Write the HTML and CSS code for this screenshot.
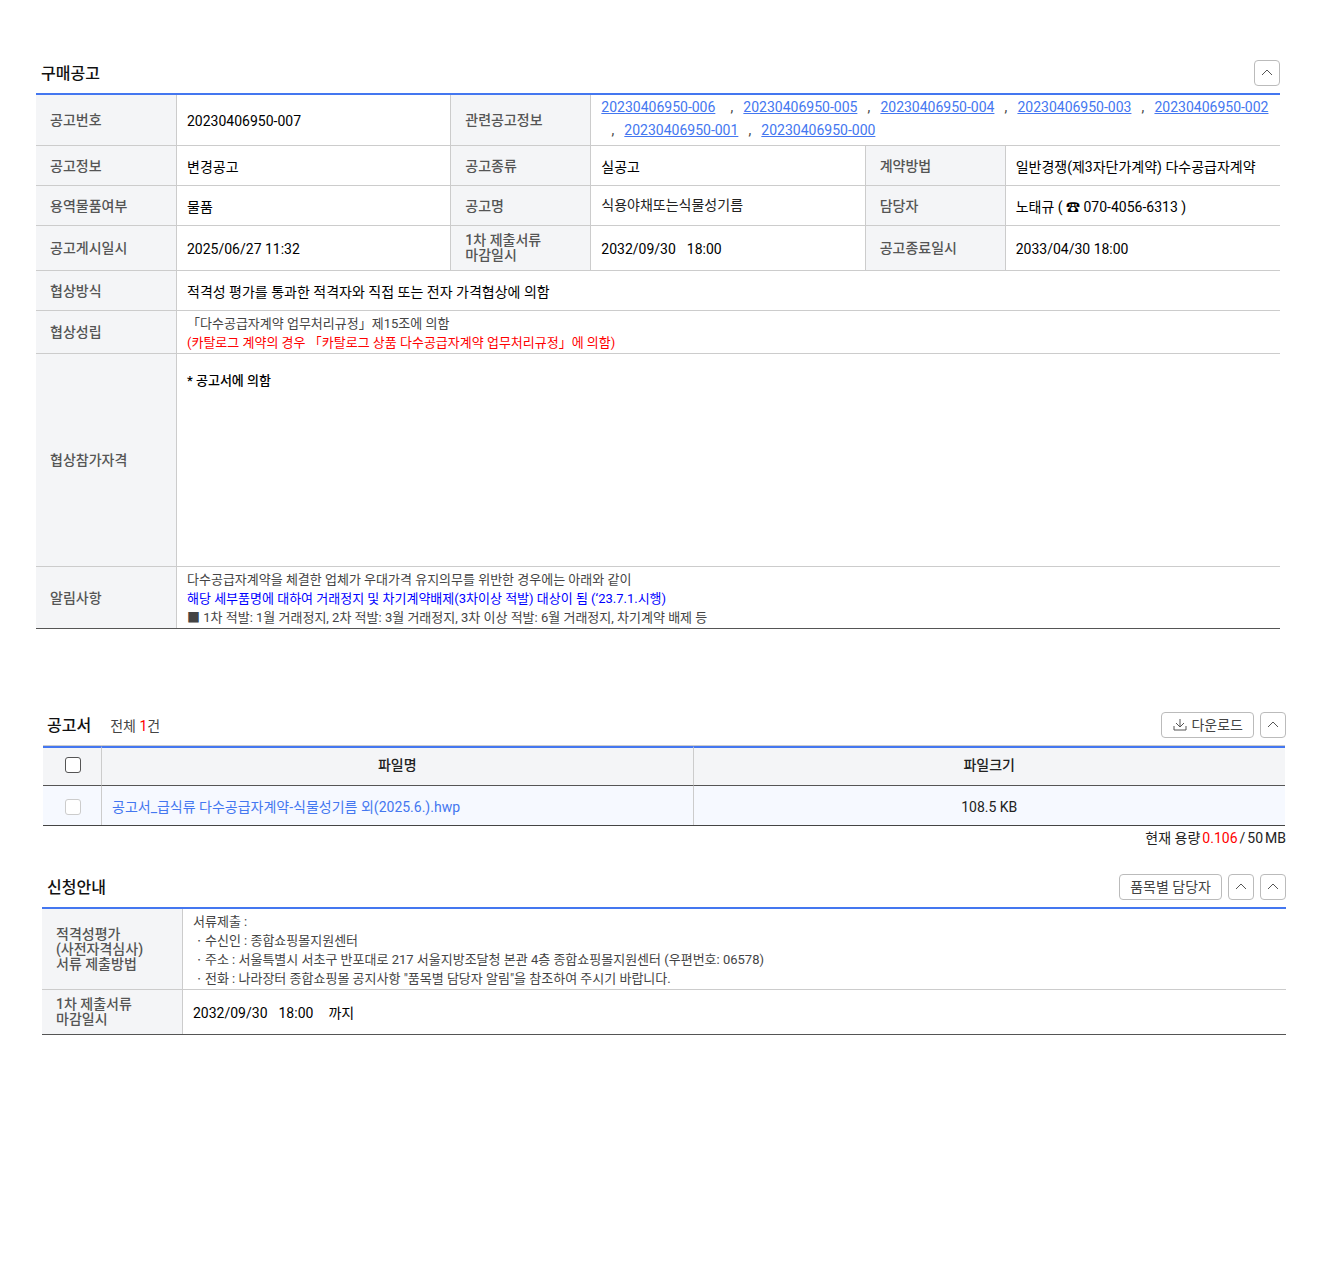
FILE: index.html
```html
<!DOCTYPE html>
<html lang="ko">
    <head>
        <meta charset="utf-8">
        <title>구매공고</title>
        <link rel="stylesheet" href="styles.css">
    </head>
    <body>
        <section class="notice">
            <div class="section-head">
                <h2>구매공고</h2>
                <div class="btns">
                    <button type="button" class="btn btn-fold" aria-label="접기"><svg viewBox="0 0 12 12"><path d="M1 8L6 3L11 8"/></svg></button>
                </div>
            </div>
            <table class="info-table">
                <colgroup>
                    <col class="col-th"><col><col class="col-th-sub"><col><col class="col-th-sub"><col>
                </colgroup>
                <tr class="row-links">
                    <th scope="row">공고번호</th>
                    <td>20230406950-007</td>
                    <th scope="row">관련공고정보</th>
                    <td colspan="3">
                        <div class="links">
                            <a href="#" class="latest">20230406950-006</a><span>,</span>
                            <a href="#">20230406950-005</a><span>,</span>
                            <a href="#">20230406950-004</a><span>,</span>
                            <a href="#">20230406950-003</a><span>,</span>
                            <a href="#">20230406950-002</a><span>,</span>
                            <a href="#">20230406950-001</a><span>,</span>
                            <a href="#">20230406950-000</a>
                        </div>
                    </td>
                </tr>
                <tr>
                    <th scope="row">공고정보</th>
                    <td>변경공고</td>
                    <th scope="row">공고종류</th>
                    <td>실공고</td>
                    <th scope="row">계약방법</th>
                    <td>일반경쟁(제3자단가계약) 다수공급자계약</td>
                </tr>
                <tr>
                    <th scope="row">용역물품여부</th>
                    <td>물품</td>
                    <th scope="row">공고명</th>
                    <td class="name">식용야채또는식물성기름</td>
                    <th scope="row">담당자</th>
                    <td>노태규 ( ☎ 070-4056-6313 )</td>
                </tr>
                <tr class="row-two">
                    <th scope="row">공고게시일시</th>
                    <td>2025/06/27 11:32</td>
                    <th scope="row">1차 제출서류<br>마감일시</th>
                    <td><span class="date">2032/09/30</span>18:00</td>
                    <th scope="row">공고종료일시</th>
                    <td>2033/04/30 18:00</td>
                </tr>
                <tr>
                    <th scope="row">협상방식</th>
                    <td colspan="5">적격성 평가를 통과한 적격자와 직접 또는 전자 가격협상에 의함</td>
                </tr>
                <tr>
                    <th scope="row">협상성립</th>
                    <td colspan="5" class="desc">
                        <p>「다수공급자계약 업무처리규정」제15조에 의함</p>
                        <p class="red">(카탈로그 계약의 경우 「카탈로그 상품 다수공급자계약 업무처리규정」에 의함)</p>
                    </td>
                </tr>
                <tr class="row-tall">
                    <th scope="row">협상참가자격</th>
                    <td colspan="5">* 공고서에 의함</td>
                </tr>
                <tr>
                    <th scope="row">알림사항</th>
                    <td colspan="5" class="desc">
                        <p>다수공급자계약을 체결한 업체가 우대가격 유지의무를 위반한 경우에는 아래와 같이</p>
                        <p class="blue">해당 세부품명에 대하여 거래정지 및 차기계약배제(3차이상 적발) 대상이 됨 (‘23.7.1.시행)</p>
                        <p>■ 1차 적발: 1월 거래정지, 2차 적발: 3월 거래정지, 3차 이상 적발: 6월 거래정지, 차기계약 배제 등</p>
                    </td>
                </tr>
            </table>
        </section>

        <section class="files">
            <div class="section-head">
                <h2>공고서</h2>
                <p class="total">전체 <em>1</em>건</p>
                <div class="btns">
                    <button type="button" class="btn"><svg viewBox="0 0 14 14"><path d="M8 1V9M4 5L8 9L12 5M2 8V12H14V8"/></svg>다운로드</button>
                    <button type="button" class="btn btn-fold" aria-label="접기"><svg viewBox="0 0 12 12"><path d="M1 8L6 3L11 8"/></svg></button>
                </div>
            </div>
            <table class="file-table">
                <colgroup>
                    <col class="col-check"><col><col>
                </colgroup>
                <thead>
                    <tr>
                        <th scope="col"><input type="checkbox" aria-label="전체 선택"></th>
                        <th scope="col">파일명</th>
                        <th scope="col">파일크기</th>
                    </tr>
                </thead>
                <tbody>
                    <tr>
                        <td><input type="checkbox" aria-label="파일 선택" disabled></td>
                        <td class="file-name"><a href="#">공고서_급식류 다수공급자계약-식물성기름 외(2025.6.).hwp</a></td>
                        <td>108.5 KB</td>
                    </tr>
                </tbody>
            </table>
            <p class="capacity"><span>현재 용량</span><em>0.106</em><span>/</span><span>50</span><span>MB</span></p>
        </section>

        <section class="apply">
            <div class="section-head">
                <h2>신청안내</h2>
                <div class="btns">
                    <button type="button" class="btn">품목별 담당자</button>
                    <button type="button" class="btn btn-fold" aria-label="접기"><svg viewBox="0 0 12 12"><path d="M1 8L6 3L11 8"/></svg></button>
                    <button type="button" class="btn btn-fold" aria-label="전체 접기"><svg viewBox="0 0 12 12"><path d="M1 8L6 3L11 8"/></svg></button>
                </div>
            </div>
            <table class="info-table">
                <colgroup>
                    <col class="col-th"><col>
                </colgroup>
                <tr>
                    <th scope="row">적격성평가<br>(사전자격심사)<br>서류 제출방법</th>
                    <td class="desc">
                        <p>서류제출 :</p>
                        <p>ㆍ수신인 : 종합쇼핑몰지원센터</p>
                        <p>ㆍ주소 : 서울특별시 서초구 반포대로 217 서울지방조달청 본관 4층 종합쇼핑몰지원센터 (우편번호: 06578)</p>
                        <p>ㆍ전화 : 나라장터 종합쇼핑몰 공지사항 "품목별 담당자 알림"을 참조하여 주시기 바랍니다.</p>
                    </td>
                </tr>
                <tr class="row-two">
                    <th scope="row">1차 제출서류<br>마감일시</th>
                    <td><span class="date">2032/09/30</span><span class="time">18:00</span>까지</td>
                </tr>
            </table>
        </section>
    </body>
</html>
```
FILE: styles.css
```css
* {
    box-sizing: border-box;
}

body {
    margin: 0;
    padding: 60px 54px 60px 42px;
    background-color: #fff;
    color: #000;
    font-family: Roboto, "Noto Sans CJK KR", sans-serif;
    font-size: 14px;
    line-height: 20px;
}

h2, p {
    margin: 0;
}

em {
    font-style: normal;
    color: #f00;
}

/* section header */
.section-head {
    display: flex;
    align-items: center;
    height: 26px;
    margin-bottom: 7px;
    padding-left: 5px;
}

.section-head h2 {
    padding-top: 1px;
    font-size: 16px;
    font-weight: 500;
    color: #111;
}

.notice {
    margin: 0 6px 83px -6px;
}

.files {
    margin-bottom: 24px;
}

.total {
    margin-left: 19px;
    padding-top: 2px;
    color: #444;
}

.btns {
    display: flex;
    gap: 6px;
    margin-left: auto;
}

.btn {
    display: flex;
    align-items: center;
    justify-content: center;
    gap: 5px;
    height: 26px;
    padding: 0 10px;
    border: 1px solid #bbb;
    border-radius: 4px;
    background-color: #fff;
    color: #444;
    font: inherit;
}

.btn svg {
    width: 14px;
    height: 14px;
    overflow: visible;
    fill: none;
    stroke: #555;
    stroke-width: 1;
}

.btn-fold {
    width: 26px;
    padding: 0;
}

.btn-fold svg {
    width: 12px;
    height: 12px;
}

/* tables */
table {
    width: 100%;
    table-layout: fixed;
    border-collapse: separate;
    border-spacing: 0;
}

.col-th {
    width: 141px;
}

.col-th-sub {
    width: 140px;
}

.info-table {
    border-top: 2px solid #4477f0;
    border-bottom: 1px solid #555;
}

.info-table th, .info-table td {
    height: 40px;
    border-right: 1px solid #ccc;
    border-bottom: 1px solid #ccc;
    text-align: left;
}

.info-table th {
    padding: 1px 14px 0;
    background-color: #f4f5f7;
    color: #555;
    font-weight: 500;
    line-height: 15px;
}

.info-table td {
    padding: 2px 0 0 10px;
}

.info-table td:last-child {
    border-right: 0;
}

.info-table tr:last-child > * {
    border-bottom: 0;
}

.info-table .row-two > * {
    height: 45px;
}

.info-table .row-two:last-child > * {
    height: 44px;
}

.info-table .row-two th {
    padding-top: 0;
}

.info-table .row-tall > * {
    height: 213px;
}

.info-table .row-tall td {
    padding-top: 17px;
    font-size: 13px;
    font-weight: 500;
    vertical-align: top;
}

.info-table td.name {
    padding: 0 0 2px 10px;
    color: #222;
}

.info-table td.desc {
    padding: 3px 10px 1px;
    color: #444;
    font-size: 13px;
    line-height: 19px;
}

.desc .red {
    color: #f00;
}

.desc .blue {
    color: #00f;
}

.info-table .row-links td:last-child {
    padding: 1px 0 3px 10px;
}

.links {
    display: flex;
    flex-wrap: wrap;
    line-height: 23px;
}

.links a {
    color: #4477f0;
}

.links .latest {
    margin-right: 5px;
}

.links span {
    width: 23px;
    color: #444;
    text-align: center;
}

.date {
    margin-right: 11px;
}

.time {
    margin-right: 15px;
}

/* file list */
.file-table {
    width: calc(100% - 2px);
    margin: 0 1px;
    border-top: 1px solid #ccc;
    border-bottom: 1px solid #444;
}

.col-check {
    width: 59px;
}

.file-table th, .file-table td {
    height: 39px;
    padding: 0 10px;
    border-right: 1px solid #ccc;
    text-align: center;
    color: #222;
}

.file-table th {
    height: 40px;
    padding-bottom: 3px;
    border-top: 2px solid #4477f0;
    border-bottom: 1px solid #555;
    background-color: #f4f5f7;
    font-weight: 500;
}

.file-table td {
    padding-top: 3px;
    background-color: #f6f9ff;
}

.file-table tr > :last-child {
    border-right: 0;
}

.file-table tr > :first-child {
    padding-left: 11px;
    padding-right: 9px;
}

.file-table td.file-name {
    text-align: left;
}

.file-name a {
    color: #4477f0;
    text-decoration: none;
}

input[type="checkbox"] {
    appearance: none;
    display: block;
    width: 16px;
    height: 16px;
    margin: 0 auto;
    border: 1px solid #555;
    border-radius: 3px;
    background-color: #fff;
}

input[type="checkbox"]:disabled {
    border-color: #ccc;
}

.capacity {
    display: flex;
    justify-content: flex-end;
    gap: 2px;
    padding: 2px 0;
    color: #222;
}
```
